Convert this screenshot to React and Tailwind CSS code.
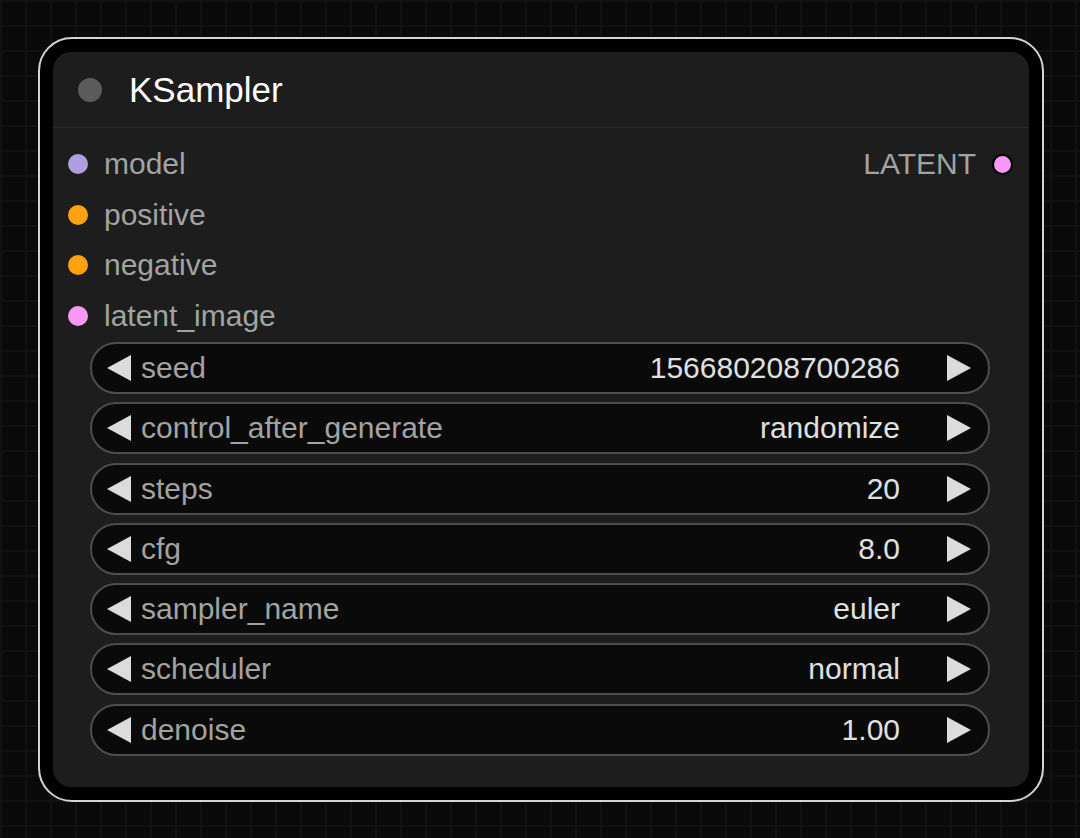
const inputs = [
  { name: 'model', color: 'bg-[#b09ee0]' },
  { name: 'positive', color: 'bg-[#ffa20f]' },
  { name: 'negative', color: 'bg-[#ffa20f]' },
  { name: 'latent_image', color: 'bg-[#f898f5]' },
]

const widgets = [
  { label: 'seed', value: '156680208700286' },
  { label: 'control_after_generate', value: 'randomize' },
  { label: 'steps', value: '20' },
  { label: 'cfg', value: '8.0' },
  { label: 'sampler_name', value: 'euler' },
  { label: 'scheduler', value: 'normal' },
  { label: 'denoise', value: '1.00' },
]

function Arrow({ dir }) {
  return (
    <svg width="24" height="26" viewBox="0 0 24 26" className="shrink-0">
      {dir === 'left' ? (
        <polygon points="24,0 24,26 0,13" fill="#dcdcdc" />
      ) : (
        <polygon points="0,0 0,26 24,13" fill="#dcdcdc" />
      )}
    </svg>
  )
}

export default function App() {
  return (
    <div
      className="min-h-[838px] w-[1080px] bg-[#0a0a0a] bg-[linear-gradient(#121212_2px,transparent_2px),linear-gradient(90deg,#121212_2px,transparent_2px)] bg-[size:25px_25px] pl-[38px] pt-[37px]"
      style={{ fontFamily: '"Liberation Sans", Arial, sans-serif' }}
    >
      <div className="w-[1006px] rounded-[34px] border-2 border-[#d4d4d4] bg-black p-[13px]">
        <div className="flex h-[735px] flex-col rounded-[18px] bg-[#1d1d1d]">
          <header className="flex h-[76px] items-center border-b border-[#2a2a2a] pl-[25px]">
            <span className="h-6 w-6 rounded-full bg-[#5b5b5b]" />
            <span className="ml-[27px] text-[35px] leading-none text-white">KSampler</span>
          </header>

          <div className="relative pt-[11px]">
            {inputs.map((inp) => (
              <div key={inp.name} className="flex h-[50.5px] items-center pl-[15px]">
                <span className={`h-5 w-5 rounded-full ${inp.color}`} />
                <span className="ml-[16px] text-[30px] leading-none text-[#a3a3a3]">{inp.name}</span>
              </div>
            ))}
            <div className="absolute right-[16px] top-[11px] flex h-[50.5px] items-center">
              <span className="text-[30px] leading-none text-[#a3a3a3]">LATENT</span>
              <span className="ml-[16px] h-[21px] w-[21px] rounded-full border-2 border-black bg-[#f898f5]" />
            </div>
          </div>

          <div className="ml-[37px] mr-[39px] mt-[1px] flex flex-col gap-[8.3px]">
            {widgets.map((w) => (
              <div
                key={w.label}
                className="flex h-[52px] items-center rounded-full border-2 border-[#4d4d4d] bg-[#0a0a0a] pl-[15px] pr-[17px]"
              >
                <Arrow dir="left" />
                <span className="ml-[10px] text-[30px] leading-none text-[#a3a3a3]">{w.label}</span>
                <span className="ml-auto text-[30px] leading-none text-[#e0e0e0]">{w.value}</span>
                <span className="ml-[47px]">
                  <Arrow dir="right" />
                </span>
              </div>
            ))}
          </div>
        </div>
      </div>
    </div>
  )
}
